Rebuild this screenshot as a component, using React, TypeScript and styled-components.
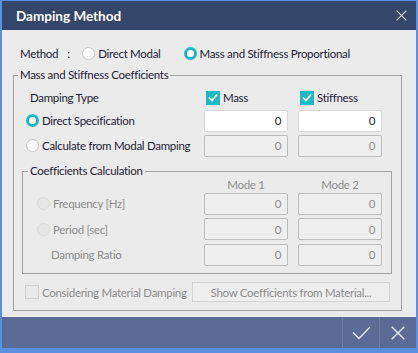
import React from "react";
import styled, { createGlobalStyle } from "styled-components";

const GlobalStyle = createGlobalStyle`
  html, body {
    margin: 0;
    padding: 0;
    background: #5b8fe0;
  }
  * { box-sizing: border-box; }
`;

const Window = styled.div`
  width: 418px;
  height: 353px;
  display: flex;
  flex-direction: column;
  border: 2px solid #5b8fe0;
  border-top-width: 1px;
  border-bottom-width: 5px;
  background: #ebebeb;
  font-family: Lato, "Liberation Sans", sans-serif;
  font-size: 11.5px;
  letter-spacing: -0.3px;
  color: #1e2233;
`;

const TitleBar = styled.div`
  height: 29px;
  flex: none;
  background: #35466b;
  color: #fff;
  display: flex;
  align-items: center;
  justify-content: space-between;
  padding: 0 9px 0 14px;
  font-weight: 700;
  font-size: 13.5px;
  letter-spacing: 0;
`;

const Body = styled.div`
  flex: 1;
  display: flex;
  flex-direction: column;
  padding: 0 14px 0 11px;
`;

const MethodRow = styled.div`
  height: 30px;
  margin-top: 8px;
  display: flex;
  align-items: center;
  padding-left: 7px;
`;

const Colon = styled.span`
  width: 24px;
  padding-left: 9px;
`;

const Option = styled.label<{ $gap?: number; $disabled?: boolean }>`
  display: inline-flex;
  align-items: center;
  gap: 3px;
  margin-right: ${(p) => p.$gap ?? 0}px;
  color: ${(p) => (p.$disabled ? "#8d8d8d" : "inherit")};
  white-space: nowrap;
`;

const Radio = styled.span<{ $on?: boolean; $disabled?: boolean }>`
  width: 13px;
  height: 13px;
  border-radius: 50%;
  background: ${(p) => (p.$disabled ? "#e6e6e6" : "#fff")};
  border: ${(p) =>
    p.$on ? "3px solid #1cb8c2" : p.$disabled ? "1px solid #d9d9d9" : "1px solid #c8c8c8"};
  flex: none;
`;

const Check = styled.span<{ $on?: boolean }>`
  width: 14px;
  height: 14px;
  flex: none;
  background: ${(p) => (p.$on ? "#20b9c3" : "#e9e9e9")};
  border: ${(p) => (p.$on ? "none" : "1px solid #d2d2d2")};
  display: flex;
  align-items: center;
  justify-content: center;
`;

const Group = styled.fieldset`
  margin: 0;
  min-width: 0;
  border: 1px solid #a3a3a3;
  padding: 0 19px 0 12px;
`;

const InnerGroup = styled(Group)`
  margin: 6px -10px 0 -4px;
  padding: 0 9px 0 14px;
`;

const Legend = styled.legend<{ $shift: number }>`
  padding: 0 2px;
  margin-left: ${(p) => p.$shift}px;
  line-height: 14px;
`;

const Grid = styled.div`
  display: grid;
  grid-template-columns: minmax(0, 1fr) 84px 84px;
  column-gap: 10px;
  align-items: center;
`;

const HeadRow = styled(Grid)`
  height: 21px;
  margin-top: 5px;
`;

const ModeRow = styled(Grid)`
  height: 13px;
`;

const Row = styled(Grid)<{ $h?: number }>`
  height: ${(p) => p.$h ?? 25}px;
`;

const ModeHead = styled.div`
  text-align: center;
  color: #8d8d8d;
`;

const Field = styled.div<{ $disabled?: boolean }>`
  height: 22px;
  border: 1px solid ${(p) => (p.$disabled ? "#bdbdbd" : "#d6d6d6")};
  border-radius: 2px;
  background: ${(p) => (p.$disabled ? "#efefef" : "#fff")};
  color: ${(p) => (p.$disabled ? "#8d8d8d" : "#1e2233")};
  display: flex;
  align-items: center;
  justify-content: flex-end;
  padding-right: 6px;
`;

const Indent = styled.span<{ $x: number }>`
  padding-left: ${(p) => p.$x}px;
`;

const Boxed = styled.span`
  margin-left: 2px;
  display: inline-flex;
  align-items: center;
  gap: 3px;
`;

const BottomRow = styled.div`
  display: flex;
  align-items: center;
  justify-content: space-between;
  height: 36px;
  margin-left: -1px;
`;

const GhostButton = styled.div`
  width: 198px;
  height: 20px;
  margin-right: -8px;
  border: 1px solid #d3d3d3;
  background: #eeeeee;
  color: #8d8d8d;
  display: flex;
  align-items: center;
  justify-content: center;
`;

const Footer = styled.div`
  height: 31px;
  flex: none;
  margin-top: 6px;
  background: #5b6b96;
  display: flex;
  justify-content: flex-end;
`;

const FooterButton = styled.div`
  width: 37px;
  border-left: 1px solid #6d7ca3;
  display: flex;
  align-items: center;
  justify-content: center;
`;

const Tick = () => (
  <svg width="10" height="9" viewBox="0 0 10 9">
    <path d="M1 4.5 L4 7.5 L9 1.5" fill="none" stroke="#fff" strokeWidth="1.6" />
  </svg>
);

const Cross = ({ size, color }: { size: number; color: string }) => (
  <svg width={size} height={size} viewBox="0 0 10 10">
    <path d="M0.5 0.5 L9.5 9.5 M9.5 0.5 L0.5 9.5" stroke={color} strokeWidth="1" fill="none" />
  </svg>
);

const BigTick = () => (
  <svg width="19" height="14" viewBox="0 0 19 14">
    <path d="M1 6.5 L7 12.5 L18 1" fill="none" stroke="#e8ecf5" strokeWidth="1.3" />
  </svg>
);

export default function App() {
  return (
    <>
      <GlobalStyle />
      <Window>
        <TitleBar>
          <span>Damping Method</span>
          <Cross size={11} color="#d5d9e3" />
        </TitleBar>
        <Body>
          <MethodRow>
            <span>Method</span>
            <Colon>:</Colon>
            <Option $gap={23}>
              <Radio />
              Direct Modal
            </Option>
            <Option>
              <Radio $on />
              Mass and Stiffness Proportional
            </Option>
          </MethodRow>
          <Group>
            <Legend $shift={-8}>Mass and Stiffness Coefficients</Legend>
            <HeadRow>
              <Indent $x={4}>Damping Type</Indent>
              <Boxed>
                <Check $on>
                  <Tick />
                </Check>
                Mass
              </Boxed>
              <Boxed>
                <Check $on>
                  <Tick />
                </Check>
                Stiffness
              </Boxed>
            </HeadRow>
            <Row>
              <Option>
                <Radio $on />
                Direct Specification
              </Option>
              <Field>0</Field>
              <Field>0</Field>
            </Row>
            <Row>
              <Option>
                <Radio />
                Calculate from Modal Damping
              </Option>
              <Field $disabled>0</Field>
              <Field $disabled>0</Field>
            </Row>
            <InnerGroup>
              <Legend $shift={-9}>Coefficients Calculation</Legend>
              <ModeRow>
                <span />
                <ModeHead>Mode 1</ModeHead>
                <ModeHead>Mode 2</ModeHead>
              </ModeRow>
              <Row $h={25.5}>
                <Option $disabled>
                  <Radio $disabled />
                  Frequency [Hz]
                </Option>
                <Field $disabled>0</Field>
                <Field $disabled>0</Field>
              </Row>
              <Row $h={25.5}>
                <Option $disabled>
                  <Radio $disabled />
                  Period [sec]
                </Option>
                <Field $disabled>0</Field>
                <Field $disabled>0</Field>
              </Row>
              <Row $h={25.5}>
                <Option $disabled>
                  <Indent $x={14}>Damping Ratio</Indent>
                </Option>
                <Field $disabled>0</Field>
                <Field $disabled>0</Field>
              </Row>
              <Row $h={5.5} />
            </InnerGroup>
            <BottomRow>
              <Option $disabled>
                <Check />
                Considering Material Damping
              </Option>
              <GhostButton>Show Coefficients from Material...</GhostButton>
            </BottomRow>
          </Group>
        </Body>
        <Footer>
          <FooterButton>
            <BigTick />
          </FooterButton>
          <FooterButton>
            <Cross size={14} color="#e8ecf5" />
          </FooterButton>
        </Footer>
      </Window>
    </>
  );
}
